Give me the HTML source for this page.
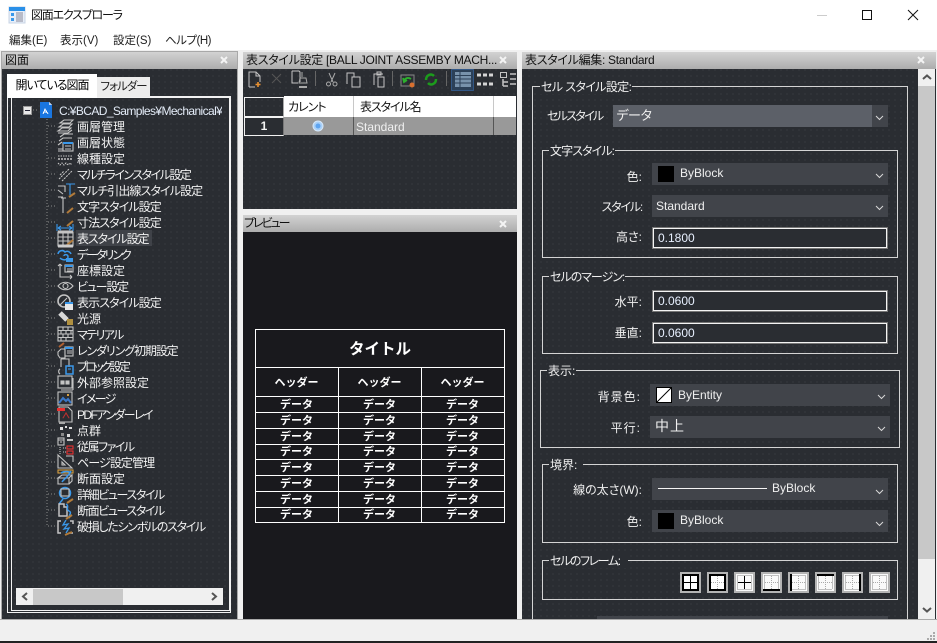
<!DOCTYPE html>
<html lang="ja"><head><meta charset="utf-8"><title>図面エクスプローラ</title>
<style>
html,body{margin:0;padding:0}
body{width:937px;height:643px;position:relative;overflow:hidden;background:#f0f0f0;font:12px/16px "Liberation Sans","Noto Sans CJK JP",sans-serif;font-feature-settings:"palt";color:#111}
.a{position:absolute;white-space:nowrap}
.dk{position:absolute;background-color:#2a2d32;background-image:radial-gradient(circle at 1px 1px,#34373c 0.7px,transparent 1px);background-size:6px 6px}
.tt{position:absolute;height:17px;background:linear-gradient(#d2d2d2,#adadad);line-height:16px;color:#111;padding-left:2px;box-sizing:border-box;white-space:nowrap}
.t{position:absolute;white-space:nowrap;color:#f2f2f2;left:77px;line-height:16px;margin-top:1px}
.g{position:absolute;border:1px solid #d4d4d4;box-sizing:border-box}
.lg{position:absolute;white-space:nowrap;color:#f0f0f0;background:#2a2d32;line-height:14px;height:14px;padding:0 1px}
.cb{position:absolute;height:22px;background:#41444a;color:#f0f0f0;line-height:21px;box-sizing:border-box}
.lb{position:absolute;white-space:nowrap;color:#f0f0f0;text-align:right;line-height:16px}
.in{position:absolute;height:22px;box-sizing:border-box;border:1px solid #777;outline:1px solid #f4f4f4;outline-offset:-2px;color:#e8f0ff;line-height:21px;padding-left:5px;background:#2a2d32}
.h{position:absolute;background:#fff;height:1px;left:255px;width:250px}
.v{position:absolute;background:#fff;width:1px;top:367px;height:155px}
.p{position:absolute;color:#fff;font-weight:bold;text-align:center;white-space:nowrap;width:83px;font-feature-settings:normal}
.d{font-size:11px;line-height:14px;margin-top:1px}
</style></head><body>
<div class="a" style="left:0;top:0;width:937px;height:50px;background:#fff"></div>
<div class="a" style="left:31px;top:7px;font-size:12px;letter-spacing:-1.200px">図面エクスプローラ</div>
<div class="a" style="left:9px;top:33px;color:#222;font-size:11.500px">編集(E)</div>
<div class="a" style="left:60px;top:33px;color:#222;font-size:11.500px">表示(V)</div>
<div class="a" style="left:113px;top:33px;color:#222;font-size:11.500px">設定(S)</div>
<div class="a" style="left:165px;top:33px;color:#222;font-size:11.500px;letter-spacing:-.5px">ヘルプ(H)</div>

<!-- left panel -->
<div class="a" style="left:1px;top:51px;width:237px;height:569px;border:1px solid #a8a8a8;box-sizing:border-box"></div>
<div class="tt" style="left:2px;top:52px;width:235px;font-size:12px;padding-left:3px">図面</div>
<div class="dk" style="left:2px;top:69px;width:235px;height:550px"></div>
<div class="a" style="left:7px;top:96px;width:224px;height:517px;border:1px solid #f2f2f2;box-sizing:border-box;border-left-width:1px"></div>
<div class="a" style="left:11px;top:96px;width:219px;height:515px;border:1px solid #f2f2f2;box-sizing:border-box;border-top-width:2px"></div>
<div class="a" style="left:7px;top:74px;width:90px;height:24px;background:#fff;line-height:22px;text-align:center;color:#000;font-size:12px;letter-spacing:-1px">開いている図面</div>
<div class="a" style="left:97px;top:77px;width:53px;height:20px;background:#ececec;line-height:21px;text-align:center;color:#222;font-size:11.500px;letter-spacing:-1px">フォルダー</div>
<div class="a" style="left:16px;top:588px;width:207px;height:17px;background:#f0f0f0"></div>
<div class="a" style="left:33px;top:589px;width:90px;height:16px;background:#c8c8c8"></div>
<div class="a" style="left:76px;top:230px;width:76px;height:16px;background:#3f4248"></div>

<div class="t" style="left:59px;top:102px;color:#e4ecf8;width:163px;overflow:hidden;letter-spacing:-.6px">C:¥BCAD_Samples¥Mechanical¥</div>
<div class="t" style="top:118px">画層管理</div>
<div class="t" style="top:134px">画層状態</div>
<div class="t" style="top:150px">線種設定</div>
<div class="t" style="top:166px;letter-spacing:-1.500px">マルチラインスタイル設定</div>
<div class="t" style="top:182px;letter-spacing:-.9px">マルチ引出線スタイル設定</div>
<div class="t" style="top:198px;letter-spacing:-.9px">文字スタイル設定</div>
<div class="t" style="top:214px;letter-spacing:-.9px">寸法スタイル設定</div>
<div class="t" style="top:230px;letter-spacing:-1.100px">表スタイル設定</div>
<div class="t" style="top:246px;letter-spacing:-2px">データリンク</div>
<div class="t" style="top:262px">座標設定</div>
<div class="t" style="top:278px;letter-spacing:-1.200px">ビュー設定</div>
<div class="t" style="top:294px;letter-spacing:-.9px">表示スタイル設定</div>
<div class="t" style="top:310px">光源</div>
<div class="t" style="top:326px;letter-spacing:-1.600px">マテリアル</div>
<div class="t" style="top:342px;letter-spacing:-1.100px">レンダリング初期設定</div>
<div class="t" style="top:358px;letter-spacing:-2.500px">ブロック設定</div>
<div class="t" style="top:374px">外部参照設定</div>
<div class="t" style="top:390px;letter-spacing:-1.700px">イメージ</div>
<div class="t" style="top:406px;letter-spacing:-1.600px">PDFアンダーレイ</div>
<div class="t" style="top:422px">点群</div>
<div class="t" style="top:438px;letter-spacing:-1.500px">従属ファイル</div>
<div class="t" style="top:454px;letter-spacing:-.9px">ページ設定管理</div>
<div class="t" style="top:470px">断面設定</div>
<div class="t" style="top:486px;letter-spacing:-1.400px">詳細ビュースタイル</div>
<div class="t" style="top:502px;letter-spacing:-1.400px">断面ビュースタイル</div>
<div class="t" style="top:518px;letter-spacing:-1.300px">破損したシンボルのスタイル</div>

<!-- middle panels -->
<div class="tt" style="left:243px;top:52px;width:274px;padding-left:3px;letter-spacing:-.3px">表スタイル設定 [BALL JOINT ASSEMBY MACH...</div>
<div class="dk" style="left:243px;top:69px;width:274px;height:140px"></div>
<div class="a" style="left:284px;top:96px;width:232px;height:21px;background:#fff"></div>
<div class="a" style="left:288px;top:99px;color:#111;letter-spacing:-1px">カレント</div>
<div class="a" style="left:360px;top:99px;color:#111;letter-spacing:-1.100px">表スタイル名</div>
<div class="a" style="left:353px;top:96px;width:1px;height:39px;background:#c8c8c8"></div>
<div class="a" style="left:493px;top:96px;width:1px;height:39px;background:#c8c8c8"></div>
<div class="a" style="left:244px;top:97px;width:40px;height:20px;border:1px solid #f2f2f2;border-right:1px solid #aaa;box-sizing:border-box"></div>
<div class="a" style="left:284px;top:117px;width:232px;height:18px;background:#999"></div>
<div class="a" style="left:353px;top:117px;width:1px;height:18px;background:#555"></div>
<div class="a" style="left:493px;top:117px;width:1px;height:18px;background:#555"></div>
<div class="a" style="left:244px;top:117px;width:40px;height:19px;border:1px solid #f2f2f2;border-right-color:#777;box-sizing:border-box;text-align:center;color:#f4f4f4;font-weight:bold;line-height:17px;background:#2a2d32">1</div>
<div class="a" style="left:356px;top:119px;color:#f0f0f0">Standard</div>

<div class="tt" style="left:243px;top:215px;width:274px;padding-left:1px;letter-spacing:-2px">プレビュー</div>
<div class="a" style="left:243px;top:232px;width:274px;height:387px;background:#19191d"></div>
<div class="h" style="top:329px"></div><div class="h" style="top:367px"></div><div class="h" style="top:396px"></div><div class="h" style="top:412px"></div><div class="h" style="top:428px"></div><div class="h" style="top:444px"></div><div class="h" style="top:459px"></div><div class="h" style="top:475px"></div><div class="h" style="top:491px"></div><div class="h" style="top:507px"></div><div class="h" style="top:522px"></div>
<div class="v" style="left:255px;top:329px;height:194px"></div><div class="v" style="left:504px;top:329px;height:194px"></div><div class="v" style="left:338px"></div><div class="v" style="left:421px"></div>
<div class="p" style="left:255px;width:250px;top:341px;font-size:15.500px;line-height:18px">タイトル</div>
<div class="p" style="left:255px;top:376px;font-size:11px;line-height:14px">ヘッダー</div><div class="p" style="left:338px;top:376px;font-size:11px;line-height:14px">ヘッダー</div><div class="p" style="left:421px;top:376px;font-size:11px;line-height:14px">ヘッダー</div>
<div class="p d" style="left:255px;top:397px">データ</div><div class="p d" style="left:338px;top:397px">データ</div><div class="p d" style="left:421px;top:397px">データ</div>
<div class="p d" style="left:255px;top:413px">データ</div><div class="p d" style="left:338px;top:413px">データ</div><div class="p d" style="left:421px;top:413px">データ</div>
<div class="p d" style="left:255px;top:429px">データ</div><div class="p d" style="left:338px;top:429px">データ</div><div class="p d" style="left:421px;top:429px">データ</div>
<div class="p d" style="left:255px;top:444px">データ</div><div class="p d" style="left:338px;top:444px">データ</div><div class="p d" style="left:421px;top:444px">データ</div>
<div class="p d" style="left:255px;top:460px">データ</div><div class="p d" style="left:338px;top:460px">データ</div><div class="p d" style="left:421px;top:460px">データ</div>
<div class="p d" style="left:255px;top:476px">データ</div><div class="p d" style="left:338px;top:476px">データ</div><div class="p d" style="left:421px;top:476px">データ</div>
<div class="p d" style="left:255px;top:492px">データ</div><div class="p d" style="left:338px;top:492px">データ</div><div class="p d" style="left:421px;top:492px">データ</div>
<div class="p d" style="left:255px;top:507px">データ</div><div class="p d" style="left:338px;top:507px">データ</div><div class="p d" style="left:421px;top:507px">データ</div>

<!-- right panel -->
<div class="tt" style="left:522px;top:52px;width:414px;padding-left:3px;letter-spacing:-.3px">表スタイル編集: Standard</div>
<div class="dk" style="left:522px;top:69px;width:414px;height:550px"></div>
<div class="a" style="left:918px;top:69px;width:17px;height:550px;background:#f0f0f0"></div>
<div class="a" style="left:918px;top:86px;width:17px;height:473px;background:#c8c8c8"></div>

<div class="g" style="left:532px;top:86px;width:376px;height:540px;border-bottom:0"></div>
<div class="lg" style="left:540px;top:80px;letter-spacing:-.6px">セル スタイル設定:</div>
<div class="lb" style="left:547px;top:108px;letter-spacing:-1.700px">セルスタイル</div>
<div class="cb" style="left:613px;top:105px;width:275px"></div>
<div class="cb" style="left:613px;top:105px;width:259px;background:#5c6068;padding-left:3px;font-size:13px;font-feature-settings:normal;letter-spacing:-1px">データ</div>

<div class="g" style="left:542px;top:150px;width:356px;height:108px"></div>
<div class="lg" style="left:549px;top:144px;letter-spacing:-.9px">文字スタイル:</div>
<div class="lb" style="right:295px;top:169px">色:</div>
<div class="cb" style="left:652px;top:163px;width:236px;padding-left:28px">ByBlock</div>
<div class="a" style="left:658px;top:166px;width:16px;height:16px;background:#000"></div>
<div class="lb" style="right:295px;top:199px;letter-spacing:-1.200px">スタイル:</div>
<div class="cb" style="left:652px;top:195px;width:236px;padding-left:4px;line-height:23px">Standard</div>
<div class="lb" style="right:295px;top:229px">高さ:</div>
<div class="in" style="left:652px;top:227px;width:236px">0.1800</div>

<div class="g" style="left:542px;top:276px;width:356px;height:78px"></div>
<div class="lg" style="left:549px;top:270px;letter-spacing:-1px">セルのマージン:</div>
<div class="lb" style="right:295px;top:294px">水平:</div>
<div class="in" style="left:652px;top:290px;width:236px">0.0600</div>
<div class="lb" style="right:295px;top:325px">垂直:</div>
<div class="in" style="left:652px;top:322px;width:236px">0.0600</div>

<div class="g" style="left:540px;top:370px;width:360px;height:78px"></div>
<div class="lg" style="left:547px;top:364px">表示:</div>
<div class="lb" style="right:296px;top:389px;letter-spacing:1px">背景色:</div>
<div class="cb" style="left:650px;top:384px;width:240px;padding-left:28px;line-height:23px">ByEntity</div>
<div class="lb" style="right:296px;top:420px;letter-spacing:1px">平行:</div>
<div class="cb" style="left:650px;top:416px;width:240px;padding-left:5px;font-size:14px;letter-spacing:1px">中上</div>

<div class="g" style="left:542px;top:464px;width:356px;height:79px"></div>
<div class="lg" style="left:549px;top:458px;padding-right:6px">境界:</div>
<div class="lb" style="right:295px;top:482px">線の太さ(W):</div>
<div class="cb" style="left:652px;top:478px;width:236px;padding-left:120px">ByBlock</div>
<div class="lb" style="right:295px;top:514px">色:</div>
<div class="cb" style="left:652px;top:510px;width:236px;padding-left:28px">ByBlock</div>
<div class="a" style="left:658px;top:513px;width:16px;height:16px;background:#000"></div>

<div class="g" style="left:542px;top:560px;width:356px;height:40px"></div>
<div class="lg" style="left:549px;top:554px;padding-right:8px;letter-spacing:-1.400px">セルのフレーム:</div>
<div class="a" style="left:597px;top:616px;width:291px;height:3px;background:#41444a"></div>
<div class="a" style="left:0;top:619px;width:937px;height:22px;background:#f0f0f0"></div>
<div class="a" style="left:0;top:619px;width:937px;height:1px;background:#aaa"></div>
<div class="a" style="left:0;top:641px;width:937px;height:2px;background:#222"></div>

<svg class="a" style="left:0;top:0" width="937" height="643" viewBox="0 0 937 643" fill="none" shape-rendering="crispEdges">
<!-- title icon -->
<rect x="9" y="7" width="16" height="16" fill="#e8eef8" stroke="#c8d4e4"/><rect x="9" y="7" width="16" height="4" fill="#2a90e8"/><rect x="11" y="13" width="3" height="3" fill="#3a98ea"/><rect x="11" y="18" width="3" height="3" fill="#3a98ea"/><path d="M16 13h7M16 15h7M16 17h7M16 19h7M16 21h7" stroke="#889"/>
<!-- window -->
<path d="M817 15.500h10" stroke="#ccc"/><rect x="862.500" y="10.500" width="9" height="9" stroke="#111"/>
<g shape-rendering="auto"><path d="M908 10l10 10M918 10l-10 10" stroke="#111"/></g>
<!-- closes -->
<g shape-rendering="auto" stroke="#f4f4f4" stroke-width="2"><path d="M221 57l6 6M227 57l-6 6M500 57l6 6M506 57l-6 6M500 221l6 6M506 221l-6 6M918 57l6 6M924 57l-6 6"/></g>
<!-- tree lines -->
<path d="M47 116V526M33 110h6M48 126h8M48 142h8M48 158h8M48 174h8M48 190h8M48 206h8M48 222h8M48 238h8M48 254h8M48 270h8M48 286h8M48 302h8M48 318h8M48 334h8M48 350h8M48 366h8M48 382h8M48 398h8M48 414h8M48 430h8M48 446h8M48 462h8M48 478h8M48 494h8M48 510h8M48 526h8" stroke="#8a8a8a" stroke-dasharray="1 2"/>
<rect x="23.500" y="106.500" width="8" height="8" fill="#e8e8e8" stroke="#999"/><path d="M25 110.500h5" stroke="#223"/>
<path d="M40 102h9l3 3v13H40z" fill="#1a76e0"/><path d="M49 102v3h3" fill="#bcd4f4"/><path d="M43 114l2-5 3 5M44 112h3" stroke="#fff"/>
<g shape-rendering="auto" stroke="#c4c4c4" stroke-width="1.100">
<g transform="translate(57,118)"><path d="M1 13l4-3h9l-3 3zM2 9l4-3h9l-3 3zM3 5l4-3h9l-3 3zM1 15h10l4-3"/></g>
<g transform="translate(57,134)"><path d="M2 7l4-3h9M3 3l4-3h9M1 11l4-3M1 15h6M1 17h6"/><rect x="6" y="9" width="10" height="8" fill="#2a2d32"/><path d="M6 9h10" stroke="#3a98ea" stroke-width="2"/><path d="M8 12h6M8 15h6"/></g>
<g transform="translate(57,150)"><path d="M1 6h15" stroke-dasharray="1.500 1"/><path d="M1 9h15" stroke-width="1.500" stroke-dasharray="2 1"/><path d="M1 13l2 2 2-2 2 2 2-2 2 2 2-2 2 2" stroke-dasharray="1.500 1"/></g>
<g transform="translate(57,166)"><path d="M2 13L12 3M5 15L15 5M3 9l4-4" stroke-dasharray="2 1"/></g>
<g transform="translate(57,182)"><path d="M1 4h7v6M1 8l5 4M1 15h5" /><path d="M9 2h9M13 2v11" stroke="#3a98ea"/><path d="M12 15l6-4" stroke="#b07a3a" stroke-width="2"/></g>
<g transform="translate(57,198)"><path d="M4 0h5M6 0v15"/><path d="M10 15l6-5" stroke="#b07a3a" stroke-width="2"/></g>
<g transform="translate(57,214)"><path d="M10 12l6-5" stroke="#b07a3a" stroke-width="2"/><path d="M0 10v7M16 10v7M1 14h14M1 14l3-2M1 14l3 2M15 14l-3-2M15 14l-3 2" stroke="#3a98ea"/></g>
<g transform="translate(57,230)"><rect x="1" y="2" width="15" height="14"/><path d="M1 2h15" stroke-width="3"/><path d="M1 7h15M1 11h15M6 3v13M11 3v13"/><path d="M10 15l6-5" stroke="#b07a3a" stroke-width="2"/></g>
<g transform="translate(57,246)"><path d="M1 0h15" stroke="#ccc" stroke-width="3"/><path d="M1 8a4 4 0 0 1 7-2 4 4 0 0 1 6 2M3 12c3 3 8 2 8-1s-4-3-4-1" stroke="#3a98ea" stroke-width="1.500"/><rect x="9" y="12" width="7" height="4" fill="#3a98ea" stroke="none"/></g>
<g transform="translate(57,262)"><path d="M3 2v13h12M3 2l-2 2M3 2l2 2M15 15l-2-2M15 15l-2 2"/><rect x="8" y="3" width="8" height="7" fill="#2a2d32"/><path d="M8 4h8" stroke="#3a98ea" stroke-width="2"/><path d="M10 7h5M10 9h5"/></g>
<g transform="translate(57,278)"><path d="M1 8c4-5 11-5 15 0-4 5-11 5-15 0z"/><circle cx="8.500" cy="8" r="2.500"/></g>
<g transform="translate(57,294)"><circle cx="7" cy="7" r="6" stroke-width="1.600"/><path d="M3 11l7-7"/><rect x="8" y="8" width="8" height="8" fill="#e8e8e8" stroke="none"/><path d="M8 9h8" stroke="#3a98ea" stroke-width="2"/></g>
<g transform="translate(57,310)"><path d="M3 3l7 7" stroke="#d8d8d8" stroke-width="5"/><rect x="10" y="9" width="6" height="6" fill="#b09040" stroke="none"/></g>
<g transform="translate(57,326)"><rect x="1" y="1" width="15" height="14"/><path d="M1 4.500h15M1 8h15M1 11.500h15M6 1v3.500M11 1v3.500M4 4.500V8M9 4.500V8M14 4.500V8M6 8v3.500M11 8v3.500M4 11.500v3.500M9 11.500v3.500"/></g>
<g transform="translate(57,342)"><path d="M2 5l5-4" stroke="#b06030" stroke-width="2"/><path d="M1 10l3-3h4v9H3l-2-3z"/><rect x="8" y="5" width="8" height="9" fill="#2a2d32"/><path d="M8 6h8" stroke="#3a98ea" stroke-width="2"/><path d="M10 9h5M10 11h5"/></g>
<g transform="translate(57,358)"><path d="M4 1h8v8M4 1v8M3 11a3 3 0 0 0 0 5"/><rect x="9" y="8" width="7" height="8" stroke="#3a98ea" stroke-width="1.500"/><path d="M11 11h3" stroke="#3a98ea"/></g>
<g transform="translate(57,374)"><rect x="1" y="2" width="14" height="12"/><path d="M4 16h12M16 4v12"/><rect x="4" y="7" width="3" height="3" fill="#c4c4c4"/><rect x="9" y="7" width="3" height="3" fill="#c4c4c4"/></g>
<g transform="translate(57,390)"><rect x="1" y="2" width="14" height="13"/><path d="M2 13l4-5 3 3 2-2 3 4" stroke="#3a78c8" stroke-width="2"/><rect x="10" y="4" width="2" height="2" fill="#d8a040" stroke="none"/></g>
<g transform="translate(57,406)"><path d="M2 1h9l4 4v11H2z"/><rect x="0" y="2" width="8" height="3" fill="#e83030" stroke="none"/><path d="M6 12l3-5 3 5" stroke="#b83030"/><rect x="2" y="16" width="6" height="2" fill="#aaa" stroke="none"/></g>
<g transform="translate(57,422)" fill="#ddd" stroke="none"><rect x="3" y="5" width="3" height="3"/><rect x="8" y="4" width="2" height="2"/><rect x="12" y="5" width="3" height="2"/><rect x="4" y="11" width="3" height="3" fill="#888"/><rect x="10" y="12" width="3" height="3"/></g>
<g transform="translate(57,438)"><rect x="1" y="0" width="6" height="7"/><path d="M1 2h6M3 4h2"/><path d="M10 2h6" stroke-width="2"/><path d="M3 9v7M6 10h3M6 14h3" stroke-dasharray="1 1"/><rect x="10" y="8" width="6" height="3" stroke="#e83030"/><rect x="10" y="13" width="6" height="3" stroke="#e83030"/></g>
<g transform="translate(57,454)"><path d="M1 1v13h14L1 1zM5 8v3h3z"/><path d="M9 2h7v6" /><rect x="1" y="16" width="15" height="3" stroke="#d8a040"/></g>
<g transform="translate(57,470)"><path d="M1 8l4-3h10l-3 3zM1 8v6h11V8M12 14l3-3V5"/><path d="M5 12c2-3 6-5 9-11" stroke="#3a98ea" stroke-width="1.500"/><path d="M4 3c3-2 8-2 10 0" stroke="#3a98ea" stroke-width="1.500"/></g>
<g transform="translate(57,486)"><circle cx="8" cy="7" r="5.500" stroke="#3a98ea" stroke-width="1.500"/><rect x="4" y="3" width="8" height="7"/><path d="M2 18l4-5" stroke="#3a98ea" stroke-width="1.500"/><path d="M10 17l6-4" stroke="#b07a3a" stroke-width="2"/></g>
<g transform="translate(57,502)"><path d="M2 2h5v3h3v9H2z" stroke-width="1.500"/><path d="M9 2c4 2-1 5 3 7s-2 5 1 7" stroke="#3a98ea" stroke-width="1.500"/><path d="M9 17l6-4" stroke="#b07a3a" stroke-width="2"/></g>
<g transform="translate(57,518)"><path d="M4 3H1v12h3M13 3h3v3M13 15h3" stroke-width="1.500"/><path d="M9 2l-3 5 5-1-4 5 5-1-3 5" stroke="#3a98ea" stroke-width="1.300"/><path d="M8 17l7-3" stroke="#b07a3a" stroke-width="2"/></g>
</g>
<!-- scrollbar arrows -->
<g shape-rendering="auto" stroke="#555" stroke-width="2"><path d="M27 593l-4 3.500 4 3.500M212 593l4 3.500-4 3.500"/><path d="M923 79l4-3.500 4 3.500M923 608l4 3.500 4-3.500"/></g>
<!-- toolbar -->
<g shape-rendering="auto" stroke="#c4c4c4">
<path d="M249 87V72h7l4 4v6M249 87h6M256 72v4h4"/><path d="M258 82v5M255.500 84.500h5" stroke="#e89030" stroke-width="1.600"/>
<path d="M272 74l9 9M281 74l-9 9" stroke="#555"/>
<path d="M292 71h7l1 1v10M292 71v12h6"/><path d="M302 72v5M299 83h8l-1-5h-6z" stroke="#aaa"/><path d="M299 87h8" stroke="#aaa" stroke-width="2"/>
<path d="M315.500 71v15M392.500 71v15M446.500 71v15" stroke="#666"/>
<path d="M329 73l4 9M335 73l-4 9" stroke="#aaa"/><circle cx="328.500" cy="84" r="2" stroke="#aaa"/><circle cx="335" cy="84" r="2" stroke="#aaa"/>
<path d="M347 84V73h7v4"/><rect x="352" y="77" width="8" height="10"/>
<path d="M374 85V74h9M377 72h4v3h-4z"/><rect x="378" y="77" width="6" height="10"/>
<rect x="401" y="75" width="13" height="11" stroke="#888"/><path d="M404 82c0-4 4-5 7-3M403 78l1 4 3-2" stroke="#2cb02c" stroke-width="1.800"/><circle cx="412" cy="85" r="2.500" fill="#d87030" stroke="none"/>
<path d="M426 80c0-5 5-7 8-4M436 79c0 5-5 7-8 4" stroke="#1c9c1c" stroke-width="2.500"/>
<rect x="451.500" y="69.500" width="22" height="21" fill="#2c4058" stroke="#3a78c8" stroke-dasharray="1 1"/><rect x="455" y="72" width="16" height="15" fill="#7892ac" stroke="none"/><path d="M455 75.500h16M455 79h16M455 83h16M460 72v15" stroke="#2c4058"/>
<path d="M477 75h4M483 75h4M489 75h4M477 84h4M483 84h4M489 84h4" stroke="#d4d4d4" stroke-width="3"/>
<rect x="500.500" y="72.500" width="6" height="5"/><path d="M510 74h6M510 79h6M510 84h6M503 79v7M503 86h5M503 82h5" stroke-width="1.500"/>
</g>
<!-- radio -->
<g shape-rendering="auto"><circle cx="318" cy="126" r="5" fill="#a8d0f8" stroke="#d8e8f8"/><circle cx="318" cy="126" r="2.500" fill="#5ea4f0"/></g>
<!-- combo chevrons -->
<g shape-rendering="auto" stroke="#d8d8d8"><path d="M876 116l3.500 3.500 3.500-3.500M876 174l3.500 3.500 3.500-3.500M876 206l3.500 3.500 3.500-3.500M878 395l3.500 3.500 3.500-3.500M878 427l3.500 3.500 3.500-3.500M876 490l3.500 3.500 3.500-3.500M876 522l3.500 3.500 3.500-3.500"/></g>
<!-- swatch -->
<rect x="656.500" y="387.500" width="15" height="15" fill="#fff" stroke="#000"/><g shape-rendering="auto"><path d="M657 402l14-14" stroke="#000"/></g>
<path d="M658 488.500h109" stroke="#f4f4f4"/>
<!-- frame buttons -->
<g>
<path d="M680 572h21v21h-21zM707 572h21v21h-21zM734 572h21v21h-21zM761 572h21v21h-21zM788 572h21v21h-21zM815 572h21v21h-21zM842 572h21v21h-21zM869 572h21v21h-21z" fill="#b4b4b4"/>
<path d="M682 574h17v17h-17zM709 574h17v17h-17zM736 574h17v17h-17zM763 574h17v17h-17zM790 574h17v17h-17zM817 574h17v17h-17zM844 574h17v17h-17zM871 574h17v17h-17z" fill="#fafafa"/>
<path d="M683 575h15v15h-15zM710 575h15v15h-15z" stroke="#000" stroke-width="2" fill="#fff"/>
<path d="M684 582.500h13M690.500 576v13M738 582.500h13M744.500 576v13" stroke="#000"/>
<path d="M711 582.500h13M717.500 576v13M765 582.500h13M771.500 576v13M792 582.500h13M798.500 576v13M819 582.500h13M825.500 576v13M846 582.500h13M852.500 576v13M873 582.500h13M879.500 576v13" stroke="#aaa" stroke-dasharray="1 1"/>
<path d="M737.500 575.500h14v14h-14zM764.500 575.500h14M764.500 575.500v14M778.500 575.500v14M791.500 575.500h14v14h-14M818.500 589.500h14M818.500 575.500v14M832.500 575.500v14M845.500 575.500h14M845.500 589.500h14M845.500 575.500v14M872.500 575.500h14v14h-14z" stroke="#888" stroke-dasharray="1 1"/>
<path d="M763 590h17M791 574v17M817 575h17M860 574v17" stroke="#000" stroke-width="2"/>
</g>
<!-- grip -->
<path d="M933 632h2v2h-2zM930 635h2v2h-2zM933 635h2v2h-2zM927 638h2v2h-2zM930 638h2v2h-2zM933 638h2v2h-2z" fill="#aaa"/>
</svg>
</body></html>
